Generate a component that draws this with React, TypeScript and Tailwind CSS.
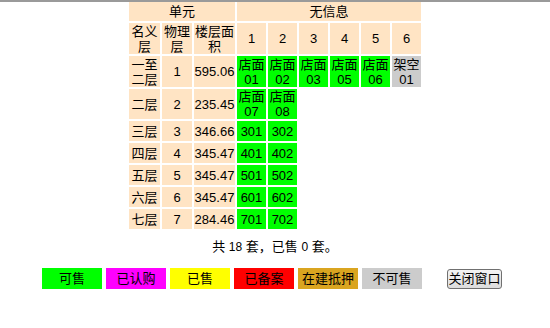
import React from "react";

type Unit = { label: string[]; color: "sale" | "none" };

type Floor = {
  name: string[];
  level: number;
  area: string;
  units: Unit[];
  tall?: "h-[31px]" | "h-[30px]";
};

const shop = (no: string): Unit => ({ label: ["店面", no], color: "sale" });
const room = (no: string): Unit => ({ label: [no], color: "sale" });

const floors: Floor[] = [
  {
    name: ["一至", "二层"],
    level: 1,
    area: "595.06",
    units: [shop("01"), shop("02"), shop("03"), shop("05"), shop("06"), { label: ["架空", "01"], color: "none" }],
    tall: "h-[31px]",
  },
  { name: ["二层"], level: 2, area: "235.45", units: [shop("07"), shop("08")], tall: "h-[30px]" },
  { name: ["三层"], level: 3, area: "346.66", units: [room("301"), room("302")] },
  { name: ["四层"], level: 4, area: "345.47", units: [room("401"), room("402")] },
  { name: ["五层"], level: 5, area: "345.47", units: [room("501"), room("502")] },
  { name: ["六层"], level: 6, area: "345.47", units: [room("601"), room("602")] },
  { name: ["七层"], level: 7, area: "284.46", units: [room("701"), room("702")] },
];

const legend = [
  { text: "可售", cls: "bg-[#00ff00]" },
  { text: "已认购", cls: "bg-[#ff00ff]" },
  { text: "已售", cls: "bg-[#ffff00]" },
  { text: "已备案", cls: "bg-[#ff0000]" },
  { text: "在建抵押", cls: "bg-[#daa520]" },
  { text: "不可售", cls: "bg-[#cccccc]" },
];

const unitBg = {
  sale: "bg-[#00ff00]",
  none: "bg-[#cccccc]",
};

const cell = "p-0 text-center align-middle leading-[15px] bg-[#ffe4c4]";

export default function App() {
  return (
    <div className="w-[550px] h-[328px] bg-white border-t-2 border-[#9a9a9a] text-black text-[13px] font-['Liberation_Sans','Noto_Sans_CJK_SC',sans-serif]">
      <table className="mx-auto -mt-[2px] border-separate border-spacing-[2px]">
        <thead>
          <tr className="h-[19px]">
            <td colSpan={3} className={cell}>
              单元
            </td>
            <td colSpan={6} className={cell}>
              无信息
            </td>
          </tr>
          <tr className="h-[31px]">
            <td className={cell + " w-[31px]"}>
              名义
              <br />层
            </td>
            <td className={cell + " w-[30px]"}>
              物理
              <br />层
            </td>
            <td className={cell + " w-[41px]"}>
              楼层面
              <br />积
            </td>
            {[1, 2, 3, 4, 5, 6].map((n) => (
              <td key={n} className={cell + " w-[29px]"}>
                {n}
              </td>
            ))}
          </tr>
        </thead>
        <tbody>
          {floors.map((f) => (
            <tr key={f.level} className={f.tall ?? "h-[20px]"}>
              <td className={cell}>
                {f.name.map((s, i) => (
                  <div key={i}>{s}</div>
                ))}
              </td>
              <td className={cell}>{f.level}</td>
              <td className={cell}>{f.area}</td>
              {[0, 1, 2, 3, 4, 5].map((i) => {
                const u = f.units[i];
                if (!u) return <td key={i} className="p-0" />;
                return (
                  <td key={i} className={"p-0 text-center align-middle leading-[15px] " + unitBg[u.color]}>
                    {u.label.map((s, j) => (
                      <div key={j}>{s}</div>
                    ))}
                  </td>
                );
              })}
            </tr>
          ))}
        </tbody>
      </table>

      <p className="mt-[8px] text-center leading-[15px]">
        共 <span className="text-[12px]">18</span> 套，已售 <span className="text-[12px]">0</span> 套。
      </p>

      <div className="flex items-center pl-[42px] mt-[13px]">
        <div className="flex gap-[4px]">
          {legend.map((l) => (
            <div key={l.text} className={"w-[60px] h-[21px] flex items-center justify-center " + l.cls}>
              {l.text}
            </div>
          ))}
        </div>
        <button className="ml-[25px] w-[55px] h-[20px] flex items-center justify-center rounded-[3px] border border-[#707070] bg-gradient-to-b from-[#f4f4f4] to-[#dcdcdc] text-[13px] leading-none">
          关闭窗口
        </button>
      </div>
    </div>
  );
}
